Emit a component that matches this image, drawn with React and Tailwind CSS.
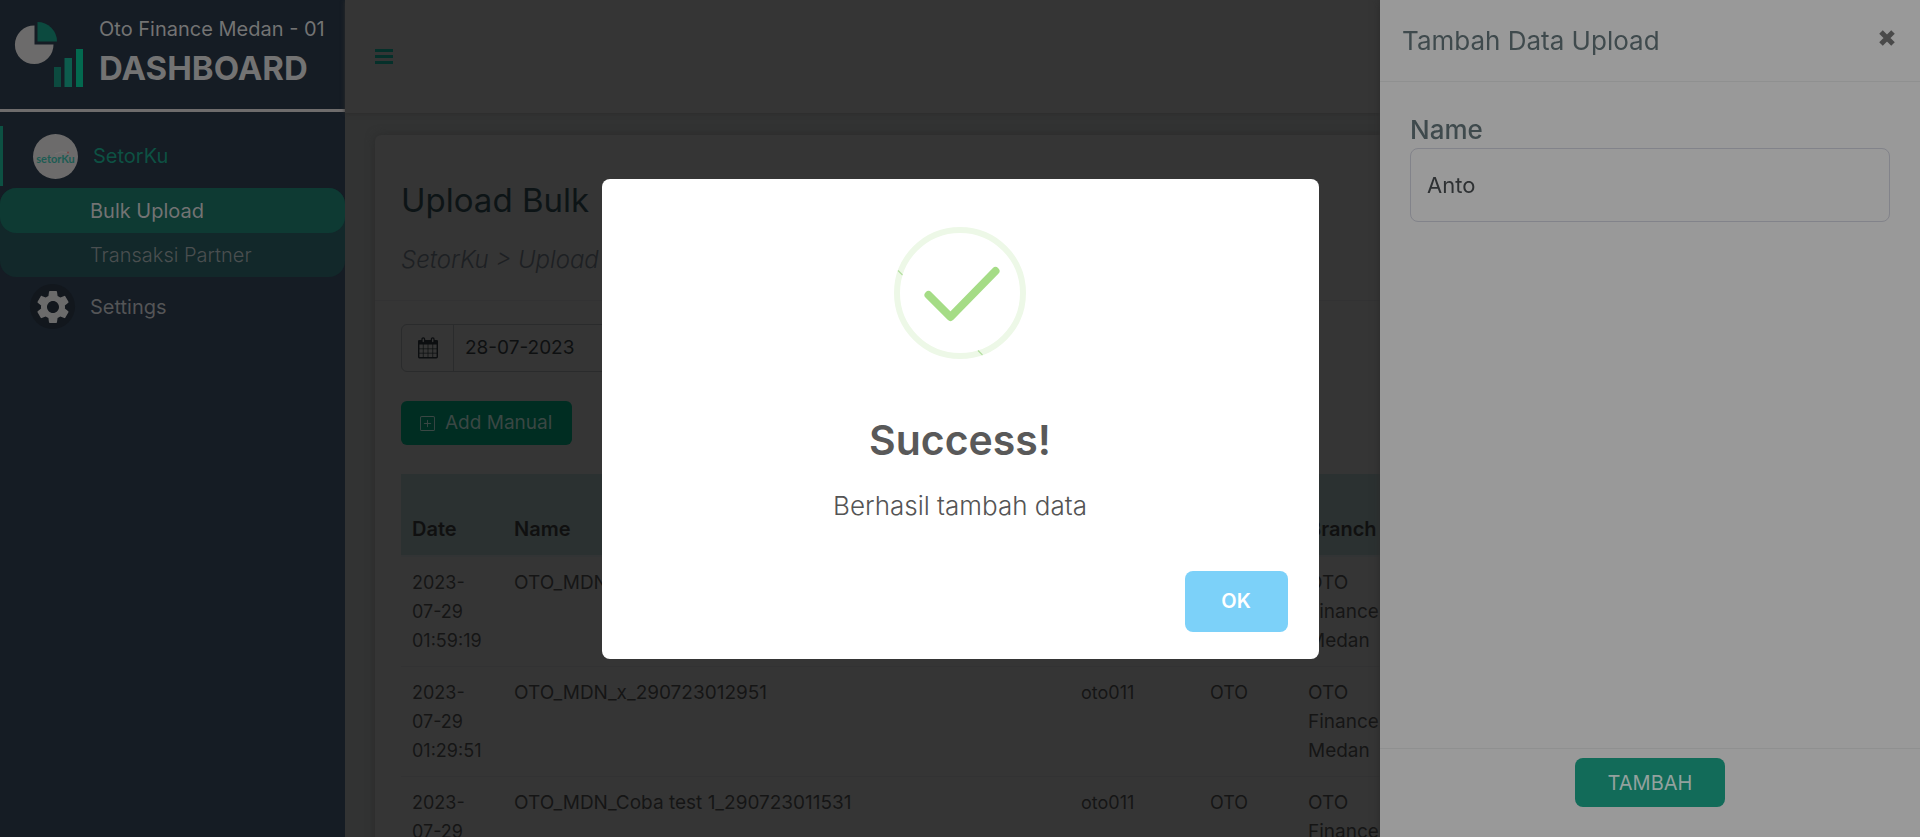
import { MdSettings } from "react-icons/md";
import { BsPlusSquare } from "react-icons/bs";

const rows = [
  { date: "2023-07-29 01:59:19", name: "OTO_MDN_290723015919" },
  { date: "2023-07-29 01:29:51", name: "OTO_MDN_x_290723012951" },
  { date: "2023-07-29 01:15:31", name: "OTO_MDN_Coba test 1_290723011531" },
];

function Logo() {
  return (
    <svg viewBox="0 0 70 68" className="h-[68px] w-[70px] shrink-0" aria-hidden="true">
      <path d="M20.500 4.500A19.300 19.300 0 1 0 39.500 23.500H20.500Z" fill="#6c6b6b" />
      <path d="M23.500 1V20.500H43A19.500 19.500 0 0 0 23.500 1Z" fill="#0c4a3f" />
      <rect x="40" y="46" width="7" height="20" fill="#0c4a3f" />
      <rect x="50.500" y="37" width="7.500" height="29" fill="#0d5c4d" />
      <rect x="62" y="28" width="7" height="38" fill="#03694f" />
    </svg>
  );
}

function BrandBadge() {
  return (
    <svg viewBox="0 0 45 45" className="size-[45px] shrink-0" aria-hidden="true">
      <circle cx="22.500" cy="22.500" r="22.500" fill="#6c6b6b" />
      <path d="M22 20Q28 16.500 34 18.500" fill="none" stroke="#7b7473" strokeWidth="0.800" />
      <circle cx="35" cy="18.500" r="1" fill="#7c4545" />
      <text x="22.500" y="28.500" textAnchor="middle" fontSize="11" fontWeight="700" fill="#1c5c53" className="font-['Lato',sans-serif]">
        setorKu
      </text>
    </svg>
  );
}

function CalendarIcon() {
  return (
    <svg viewBox="0 0 20 22" className="h-[22px] w-5" fill="none" stroke="#0c0e10" aria-hidden="true">
      <rect x="0.700" y="3.700" width="18.600" height="17" rx="1" strokeWidth="1.400" />
      <path d="M0 3.500H20V7.500H0Z" fill="#0c0e10" stroke="none" />
      <path d="M5.300 7V21M10 7V21M14.700 7V21M1 11.800H19M1 16.200H19" strokeWidth="0.700" />
      <rect x="4" y="0.800" width="2.600" height="5" rx="1.300" fill="#353535" strokeWidth="1.200" />
      <rect x="13.400" y="0.800" width="2.600" height="5" rx="1.300" fill="#353535" strokeWidth="1.200" />
    </svg>
  );
}

function SuccessIcon() {
  return (
    <svg viewBox="0 0 132 132" className="size-[132px]" fill="none" aria-hidden="true">
      <circle cx="66" cy="66" r="63" stroke="#edf8e7" strokeWidth="6" />
      <path d="M4 43.500L8.500 48M84 123.500L88.500 128" stroke="#b4dfa0" strokeWidth="1.200" />
      <path d="M34.500 68L56.500 90L101.500 44" stroke="#a5dc86" strokeWidth="8" strokeLinecap="round" strokeLinejoin="round" />
    </svg>
  );
}

function Sidebar() {
  return (
    <aside className="flex w-[345px] shrink-0 flex-col bg-[#151c24]">
      <div className="flex h-28 items-start gap-[15px] border-b-[3px] border-[#6e6c6c] pl-3.5">
        <div className="pt-[21px]">
          <Logo />
        </div>
        <div className="pt-3.5 text-[#737373]">
          <p className="text-xl leading-[30px] whitespace-nowrap">Oto Finance Medan - 01</p>
          <p className="text-[33px] leading-[48px] font-bold">DASHBOARD</p>
        </div>
      </div>
      <nav className="pt-3.5 text-xl">
        <a href="#setorku" className="flex h-[60px] items-center gap-[15px] border-l-[3px] border-[#0d5143] pl-[30px] text-[#0d5143]">
          <BrandBadge />
          SetorKu
        </a>
        <div className="mt-0.5 rounded-2xl bg-[#12282a]">
          <a href="#bulk" className="flex h-[45px] items-center rounded-2xl bg-[#0e3a33] pl-[90px] text-[#737373]">
            Bulk Upload
          </a>
          <a href="#transaksi" className="flex h-11 items-center pl-[90px] font-light text-[#4a4f50]">
            Transaksi Partner
          </a>
        </div>
        <a href="#settings" className="mt-[7px] flex h-[45px] items-center gap-[15px] pl-[30px] text-[#545557]">
          <span className="flex size-[45px] items-center justify-center rounded-full bg-[#12171d]">
            <MdSettings className="size-10 text-[#6b6b6b]" />
          </span>
          Settings
        </a>
      </nav>
    </aside>
  );
}

function DataTable() {
  return (
    <table className="mt-[29px] w-full table-fixed text-left text-lg leading-[29px] text-[#151515]">
      <colgroup>
        <col className="w-[102px]" />
        <col className="w-[567px]" />
        <col className="w-[129px]" />
        <col className="w-[98px]" />
        <col className="w-[110px]" />
        <col />
      </colgroup>
      <thead className="bg-[#2b3131] text-xl text-[#101010]">
        <tr className="h-[82px] border-b-2 border-[#323435]">
          {["Date", "Name", "User", "Partner", "Branch", "Status"].map((h) => (
            <th key={h} className="px-[11px] pb-3 align-bottom font-semibold">
              {h}
            </th>
          ))}
        </tr>
      </thead>
      <tbody>
        {rows.map((r) => (
          <tr key={r.name} className="border-b border-[#323233] align-top">
            <td className="px-[11px] py-[11px]">{r.date}</td>
            <td className="px-[11px] py-[11px] text-[19px]">{r.name}</td>
            <td className="px-[11px] py-[11px]">oto011</td>
            <td className="px-[11px] py-[11px]">OTO</td>
            <td className="py-[11px] pl-[11px] text-[19px]">OTO Finance Medan</td>
            <td className="px-[11px] py-[11px]">Success</td>
          </tr>
        ))}
      </tbody>
    </table>
  );
}

function Main() {
  return (
    <div className="flex min-w-0 flex-1 flex-col">
      <header className="flex h-[113px] shrink-0 items-center bg-[#353535] pl-[30px] shadow-[0_1px_4px_#2c2c2c]">
        <button type="button" aria-label="Toggle menu">
          <svg viewBox="0 0 18 15" className="h-[15px] w-[18px]" fill="#05302a" aria-hidden="true">
            <path d="M0 0H18V3H0ZM0 6H18V9H0ZM0 12H18V15H0Z" />
          </svg>
        </button>
      </header>
      <main className="flex-1 px-[30px] pt-[22px]">
        <section className="rounded-md bg-[#353535] pb-8 shadow-[0_0_10px_#2b2b2b]">
          <div className="h-[166px] border-b border-[#323233] px-[26px] pt-[41px]">
            <h1 className="text-[33px] leading-[48px] text-[#0d1416]">Upload Bulk</h1>
            <p className="mt-[18px] text-2xl leading-9 font-light text-[#1d2023] italic">SetorKu &gt; Upload Bulk</p>
          </div>
          <div className="px-[26px] pt-[23px]">
            <div className="flex h-12 w-[400px] overflow-hidden rounded-md border border-[#2a2b2c]">
              <span className="flex w-[52px] items-center justify-center border-r border-[#2a2b2c]">
                <CalendarIcon />
              </span>
              <input
                aria-label="Date"
                defaultValue="28-07-2023"
                className="min-w-0 flex-1 bg-transparent px-[11px] text-[19px] text-[#0e1011] outline-none"
              />
            </div>
            <button type="button" className="mt-[29px] flex h-11 w-[171px] items-center gap-2.5 rounded-md bg-[#002d22] pl-[19px] text-[19px] text-[#3a4744]">
              <BsPlusSquare className="size-[15px]" />
              Add Manual
            </button>
            <DataTable />
          </div>
        </section>
      </main>
    </div>
  );
}

function Drawer() {
  return (
    <aside className="fixed inset-y-0 right-0 flex w-[540px] flex-col bg-[#999999] shadow-[0_0_8px_#2a2a2a]">
      <div className="flex h-[82px] items-center justify-between border-b border-[#8f9090] pr-[25px] pl-[22px]">
        <h2 className="text-[26px] text-[#3f4a4d]">Tambah Data Upload</h2>
        <button type="button" aria-label="Close" className="pb-1.5">
          <svg viewBox="0 0 16 16" className="size-4" stroke="#4a4a4a" strokeWidth="5" aria-hidden="true">
            <path d="M2 2L14 14M14 2L2 14" />
          </svg>
        </button>
      </div>
      <div className="flex-1 px-[30px] pt-[30px]">
        <label htmlFor="name" className="block text-[26px] leading-9 font-medium text-[#3f4a4d]">
          Name
        </label>
        <input
          id="name"
          defaultValue="Anto"
          className="h-[74px] w-full rounded-lg border border-[#82838a] bg-transparent px-4 text-[22px] text-[#2e3133] outline-none"
        />
      </div>
      <div className="flex h-[89px] justify-center border-t border-[#8f9090] pt-[9px]">
        <button type="button" className="h-[49px] w-[150px] rounded-lg bg-[#126b59] text-xl text-[#93a19e]">
          TAMBAH
        </button>
      </div>
    </aside>
  );
}

function SuccessDialog() {
  return (
    <div className="fixed inset-0 flex items-center justify-center">
      <div role="dialog" aria-labelledby="dlg-title" className="flex w-[717px] flex-col items-center rounded-lg bg-white pt-12 pb-[27px]">
        <SuccessIcon />
        <h2 id="dlg-title" className="mt-[51px] text-[41px] leading-[60px] font-semibold text-[#595959]">
          Success!
        </h2>
        <p className="mt-[18px] text-[26px] leading-9 font-light text-[#545454]">Berhasil tambah data</p>
        <button type="button" className="mt-[47px] mr-[31px] h-[61px] w-[103px] self-end rounded-lg bg-[#7cd1f9] text-xl font-semibold text-white">
          OK
        </button>
      </div>
    </div>
  );
}

export default function App() {
  return (
    <div className="flex h-screen overflow-hidden bg-[#323333] font-['Inter',sans-serif]">
      <Sidebar />
      <Main />
      <Drawer />
      <SuccessDialog />
    </div>
  );
}
